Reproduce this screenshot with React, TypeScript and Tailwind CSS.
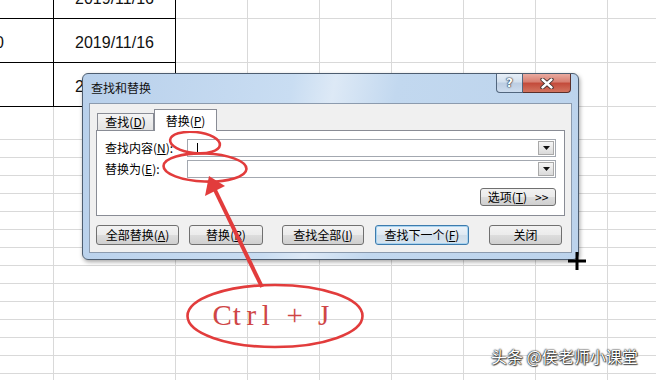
import type { ReactNode } from "react";

// Excel "查找和替换" dialog over a worksheet, with red hand-drawn annotations.

const CJK = "font-['Noto_Sans_CJK_SC',sans-serif]";

const ROWS = [
  "h-[19px]",
  "h-[44px]",
  "h-[44px]",
  "h-[33px]",
  ...Array.from({ length: 14 }, () => "h-[18px]"),
];
const COLS = ["w-[54px]", "w-[122px]", "w-[72px]", "w-[72px]", "w-[72px]", "w-[72px]", "w-[72px]", "w-[72px]", "w-[72px]"];

function Cell({ r, c }: { r: number; c: number }) {
  const border = r < 3 && c < 2 ? "border-black" : "border-[#d9d9d9]";
  let content: ReactNode = null;
  if (c === 1 && r === 0) content = <span className="block -mt-[13px]">2019/11/16</span>;
  if (c === 1 && (r === 1 || r === 2)) content = <span className="pt-[5px]">2019/11/16</span>;
  if (c === 0 && r === 1) content = <span className="-ml-[5px] pt-[5px]">0</span>;
  return (
    <div
      className={`${COLS[c]} shrink-0 flex overflow-hidden border-r border-b ${border} ${
        r === 0 ? "items-start" : "items-center"
      } ${c === 1 ? "justify-center" : "justify-start"}`}
    >
      {content}
    </div>
  );
}

function Btn({ w, children, focus }: { w: string; children: ReactNode; focus?: boolean }) {
  return (
    <div
      className={`${w} h-[20px] shrink-0 flex items-center justify-center rounded-[3px] border text-[12px] leading-none text-black ${
        focus
          ? "border-[#3d7bad] bg-[linear-gradient(#edf4fa,#dfe9f2_50%,#cfdde9_50%,#d7e4ef)] shadow-[inset_0_0_0_1px_#a7d3f0]"
          : "border-[#707070] bg-[linear-gradient(#f2f2f2,#ebebeb_50%,#dddddd_50%,#cfcfcf)]"
      }`}
    >
      {children}
    </div>
  );
}

function Combo({ caret }: { caret?: boolean }) {
  return (
    <div className="flex-1 h-[18px] flex border border-[#a3a8b0] bg-white">
      <div className="flex-1 flex items-center pl-[9px]">
        {caret && <span className="w-px h-[11px] bg-black" />}
      </div>
      <div className="w-[16px] my-px mr-px flex items-center justify-center border border-[#a9a9a9] bg-[linear-gradient(#f6f6f6,#dadada)]">
        <svg width="7" height="4" viewBox="0 0 7 4">
          <path d="M0 0h7L3.5 4z" fill="#111" />
        </svg>
      </div>
    </div>
  );
}

function Key({ k }: { k: string }) {
  return (
    <>
      (<span className="underline">{k}</span>)
    </>
  );
}

const CTRL_J = ["C", "t", "r", "l", " ", "+", " ", "J"];

export default function App() {
  return (
    <div className={`relative w-[656px] h-[380px] overflow-hidden bg-white ${CJK}`}>
      {/* worksheet */}
      <div className="flex flex-col font-['Liberation_Sans',sans-serif] text-[16px] text-[#111]">
        {ROWS.map((h, r) => (
          <div key={r} className={`${h} shrink-0 flex`}>
            {COLS.map((_, c) => (
              <Cell key={c} r={r} c={c} />
            ))}
          </div>
        ))}
      </div>

      {/* dialog */}
      <div className="absolute left-[82px] top-[73px] w-[497px] h-[187px] flex flex-col px-[6px] pb-[6px] rounded-[6px] border border-[#4d5d70] bg-[linear-gradient(100deg,#b8d0eb,#c9ddf2_40%,#dde9f6_48%,#c2d8ef_60%,#bcd3ec)] shadow-[1px_2px_4px_rgba(0,0,0,0.35)]">
        <div className="h-[29px] shrink-0 flex items-start">
          <span className="mt-[6px] ml-[2px] text-[12px] leading-[16px] text-[#111]">查找和替换</span>
          <div className="ml-auto flex mr-px">
            <div className="w-[27px] h-[19px] flex items-center justify-center rounded-bl-[4px] border border-t-0 border-[#52667e] bg-[linear-gradient(#e6eef7,#d3e0ee_45%,#bccde2_50%,#cddcee)]">
              <span className="font-['DejaVu_Sans',sans-serif] text-[12px] font-bold leading-none text-white [text-shadow:0_0_1px_#243447,0_0_1px_#243447,0_0_2px_#243447]">
                ?
              </span>
            </div>
            <div className="w-[48px] h-[19px] flex items-center justify-center rounded-br-[4px] border border-t-0 border-l-0 border-[#5a2f2a] bg-[linear-gradient(#e9aaa0,#d77d6f_45%,#c34a3a_50%,#d2735f)]">
              <svg width="14" height="11" viewBox="0 0 14 11">
                <path d="M2.5 1.5 L11.5 9.5 M11.5 1.5 L2.5 9.5" stroke="#3b2a28" strokeWidth="4.2" strokeLinecap="round" />
                <path d="M2.5 1.5 L11.5 9.5 M11.5 1.5 L2.5 9.5" stroke="#ffffff" strokeWidth="2.4" strokeLinecap="round" />
              </svg>
            </div>
          </div>
        </div>

        <div className="flex-1 flex flex-col px-[6px] pt-[5px] border border-[#8c9bae] bg-[#f0f0f0] text-[12px] text-black">
          {/* tabs */}
          <div className="h-[22px] shrink-0 flex items-start pl-px relative z-10">
            <div className="w-[57px] h-[17px] mt-[4px] flex items-center justify-center border border-b-0 border-[#898c95] bg-[linear-gradient(#f5f5f5,#e3e3e3)] leading-none">
              查找<Key k="D" />
            </div>
            <div className="w-[63px] h-[22px] flex items-center justify-center border border-b-0 border-[#898c95] bg-white leading-none">
              替换<Key k="P" />
            </div>
          </div>

          {/* tab panel */}
          <div className="-mt-px h-[86px] shrink-0 flex flex-col px-[8px] pt-[8px] border border-[#898c95] bg-white">
            <div className="flex items-center">
              <span className="w-[82px] shrink-0 leading-none">
                查找内容<Key k="N" />:
              </span>
              <Combo caret />
            </div>
            <div className="flex items-center mt-[3px]">
              <span className="w-[82px] shrink-0 leading-none">
                替换为<Key k="E" />:
              </span>
              <Combo />
            </div>
            <div className="flex justify-end mt-[10px]">
              <div className="w-[76px] h-[18px] flex items-center justify-center gap-[8px] rounded-[3px] border border-[#707070] bg-[linear-gradient(#f2f2f2,#ebebeb_50%,#dddddd_50%,#cfcfcf)] leading-none">
                <span>
                  选项<Key k="T" />
                </span>
                <span>&gt;&gt;</span>
              </div>
            </div>
          </div>

          {/* buttons */}
          <div className="flex mt-[9px]">
            <Btn w="w-[83px]">
              全部替换<Key k="A" />
            </Btn>
            <div className="w-[10px] shrink-0" />
            <Btn w="w-[74px]">
              替换<Key k="R" />
            </Btn>
            <div className="w-[19px] shrink-0" />
            <Btn w="w-[82px]">
              查找全部<Key k="I" />
            </Btn>
            <div className="w-[11px] shrink-0" />
            <Btn w="w-[94px]" focus>
              查找下一个<Key k="F" />
            </Btn>
            <div className="w-[20px] shrink-0" />
            <Btn w="w-[73px]">关闭</Btn>
          </div>
        </div>
      </div>

      {/* annotations */}
      <svg className="absolute left-0 top-0" width="656" height="380" viewBox="0 0 656 380">
        <g fill="none" stroke="#e23c3c" strokeWidth="2.6">
          <ellipse cx="195" cy="142.5" rx="25" ry="10.5" transform="rotate(6 195 142.5)" />
          <ellipse cx="205" cy="167.5" rx="41.5" ry="14" transform="rotate(2 205 167.5)" />
          <ellipse cx="275" cy="316" rx="87.5" ry="31" />
        </g>
        <path d="M215 190 L262 287" stroke="#e23c3c" strokeWidth="4" />
        <polygon points="209,176 205,196 225,186" fill="#e23c3c" />
      </svg>

      <div className="absolute left-[215px] top-[301px] flex font-['Liberation_Serif',serif] text-[29px] leading-none text-[#cf4646]">
        {CTRL_J.map((ch, i) => (
          <span key={i} className="w-[14.5px] flex justify-center whitespace-pre">
            {ch}
          </span>
        ))}
      </div>

      <div className="absolute left-[491px] top-[348px] text-[16px] leading-none text-white [text-shadow:0_0_1px_#000,0_0_2px_#000,1px_1px_1px_rgba(0,0,0,0.6)]">
        头条 @侯老师小课堂
      </div>

      {/* cell cursor */}
      <svg className="absolute left-[568px] top-[252px]" width="18" height="18" viewBox="0 0 18 18">
        <rect x="0" y="7.5" width="18" height="3" fill="#000" />
        <rect x="7.5" y="0" width="3" height="18" fill="#000" />
      </svg>
    </div>
  );
}
